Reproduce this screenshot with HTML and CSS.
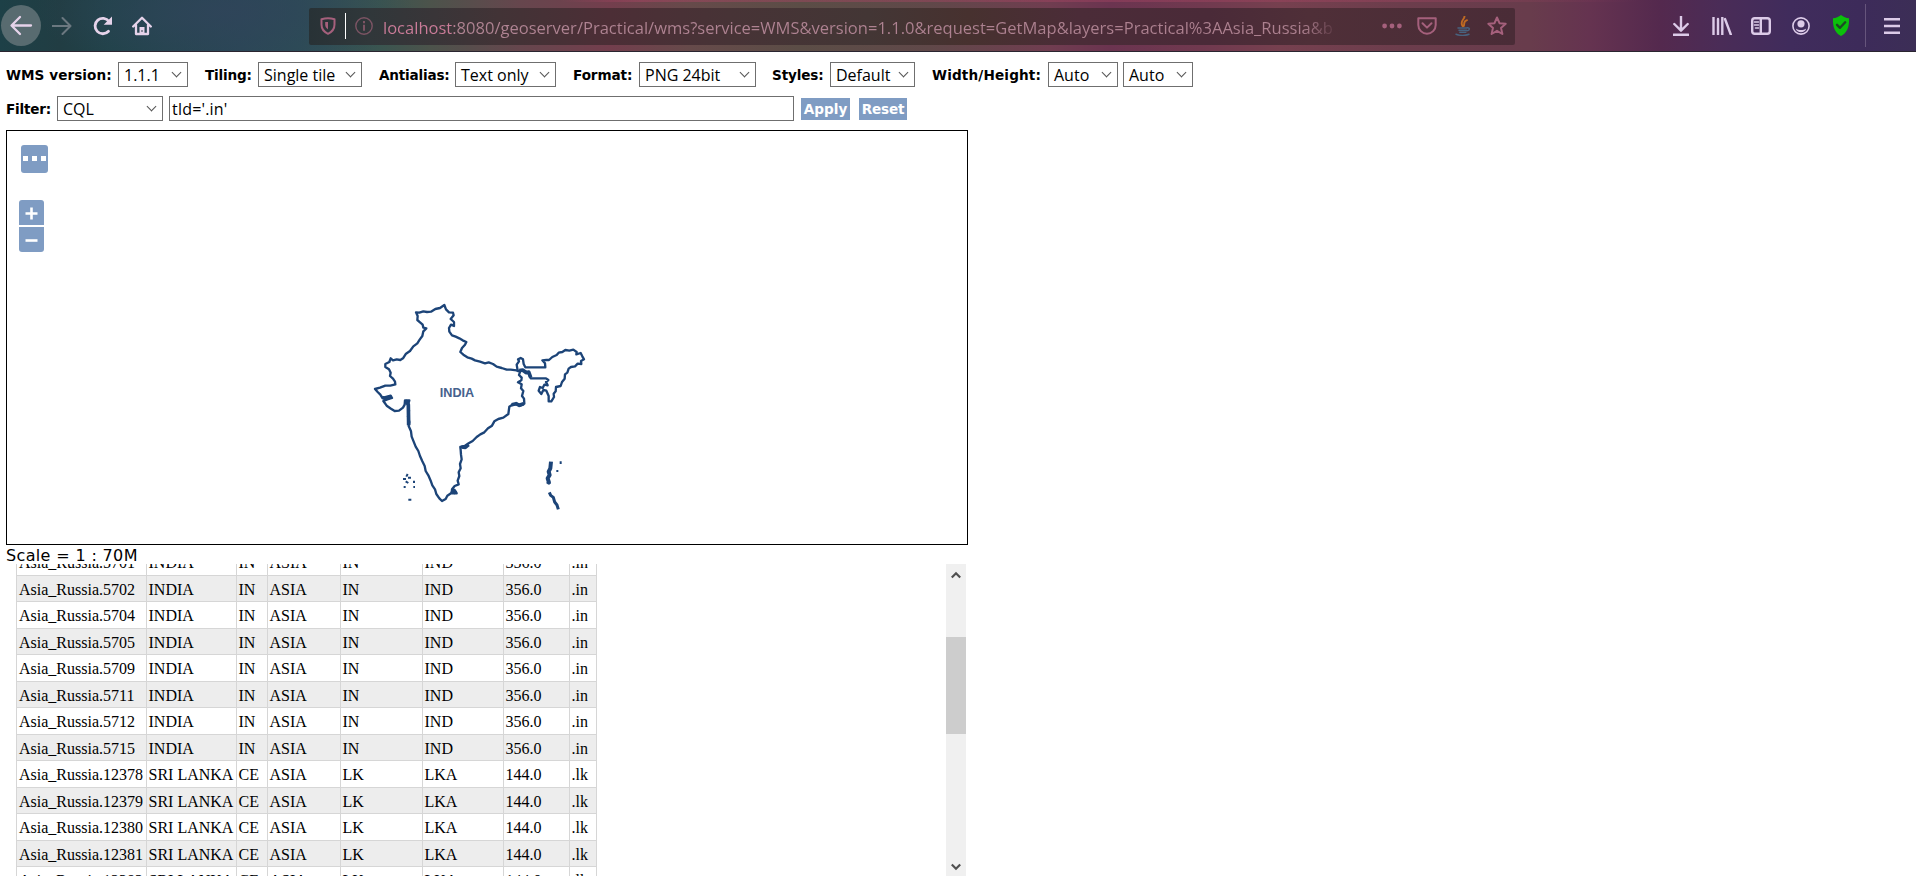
FILE: index.html
```
<!DOCTYPE html>
<html lang="en">
<head>
<meta charset="utf-8">
<title>OpenLayers map preview</title>
<link rel="stylesheet" href="styles.css">
</head>
<body>
<header class="browser">
  <div class="nav">
    <span class="back"><svg width="40" height="41" viewBox="0 0 40 41"><path d="M30 20.5H11M19 12l-8.500 8.500L19 29"/></svg></span>
    <svg class="forward" width="20" height="20" viewBox="0 0 20 20"><path d="M0 10h18M10.500 2l8 8-8 8"/></svg>
    <svg class="reload" width="20" height="20" viewBox="0 0 20 20"><path d="M15.500 15.200A7.700 7.700 0 1 1 16 5.500"/><path class="solid" d="M19 .5v8.300h-8.300z"/></svg>
    <svg class="home" width="20" height="20" viewBox="0 0 20 20"><path d="M1.200 10.500 10 1.800l8.800 8.700M4 9v9h12V9"/><path class="solid" d="M7.500 11h5v8h-5z"/><path class="hole" d="M9.500 14h1v2h-1z"/></svg>
  </div>
  <div class="urlbar">
    <svg class="tracking" width="16" height="18" viewBox="0 0 16 18"><path d="M8 1.200c2.200 0 4.500.4 6.500 1v5.300c0 4.500-2.500 7.500-6.500 9.300C4 15 1.500 12 1.500 7.500V2.200c2-.6 4.300-1 6.500-1z"/><path d="M8 5v7.500C6 11 5.200 9.500 5.200 7.500V5z" class="solid"/></svg>
    <i class="caret"></i>
    <svg class="info" width="18" height="18" viewBox="0 0 18 18"><circle cx="9" cy="9" r="8.200"/><path d="M9 7.800v6M9 4v2.200" class="bold"/></svg>
    <span class="url">localhost:8080/geoserver/Practical/wms?service=WMS&amp;version=1.1.0&amp;request=GetMap&amp;layers=Practical%3AAsia_Russia&amp;b</span>
    <svg class="dots" width="20" height="6" viewBox="0 0 20 6"><circle cx="2.600" cy="3" r="2.400"/><circle cx="10" cy="3" r="2.400"/><circle cx="17.400" cy="3" r="2.400"/></svg>
    <svg class="pocket" width="20" height="18" viewBox="0 0 20 18"><path d="M1.300 1.300h17.400V8a8.700 8.700 0 0 1-17.400 0z"/><path d="m5.500 6.300 4.500 4.300 4.500-4.300"/></svg>
    <svg class="java" width="16" height="20" viewBox="0 0 16 20"><path class="flame" d="M9.500 0C10 3.500 4 5 7.700 10.300M12 4.200C8 5.500 9.800 7.300 8.800 10"/><path class="cup" d="M3 12h9M4 14.200h7.500M4.800 16.300h6M1 18.200c4 1.400 10 1.200 13 0M12 11.800c3.500-.5 2.800 2.700 0 3"/></svg>
    <svg class="star" width="20" height="20" viewBox="0 0 20 20"><path d="m10 1.500 2.500 5.700 6.200.6-4.700 4.100 1.400 6.100-5.400-3.200L4.600 18 6 11.900 1.300 7.800l6.200-.6z"/></svg>
  </div>
  <div class="tools">
    <svg width="16" height="20" viewBox="0 0 16 20"><path d="M8 0v14M1.300 8 8 14.700 14.700 8M.5 18.800h15"/></svg>
    <svg width="20" height="18" viewBox="0 0 20 18"><path d="M1.500 0v18M6 2v16M10.300 0v18M13 2l5.800 15.500"/></svg>
    <svg width="20" height="18" viewBox="0 0 20 18"><rect x="1.200" y="1.200" width="17.600" height="15.600" rx="2.500"/><path d="M9.800 1v16"/><path class="thin" d="M3.500 5h4M3.500 8h4M4.500 11h3"/></svg>
    <svg width="18" height="18" viewBox="0 0 18 18"><circle cx="9" cy="9" r="8.100" class="thin"/><circle cx="9" cy="6.800" r="3.600" class="solid"/><path class="solid" d="M3.800 11.500c3 2 7.400 2 10.400 0-1 5-9.400 5-10.400 0z"/></svg>
    <svg width="18" height="21" viewBox="0 0 18 21"><path class="green" d="M9 0c2.500 2 5 3 8 3.300C17.500 12 15 18 9 21 3 18 .5 12 1 3.300 4 3 6.500 2 9 0z"/><path class="tick" d="m5 9.800 3 3 5.200-5.500"/></svg>
    <i class="divider"></i>
    <svg width="16" height="16" viewBox="0 0 16 16"><path d="M0 1.300h16M0 8h16M0 14.700h16"/></svg>
  </div>
</header>

<main class="page">
  <div class="row first">
    <label class="l-wms">WMS version:</label><div class="select s70">1.1.1</div>
    <label class="l-til">Tiling:</label><div class="select s104">Single tile</div>
    <label class="l-ant">Antialias:</label><div class="select s101">Text only</div>
    <label class="l-for">Format:</label><div class="select s117">PNG 24bit</div>
    <label class="l-sty">Styles:</label><div class="select s85">Default</div>
    <label class="l-wid">Width/Height:</label><div class="select s70">Auto</div><div class="select s70 next">Auto</div>
  </div>
  <div class="row second">
    <label class="l-fil">Filter:</label><div class="select s105">CQL</div>
    <div class="input">tld='.in'</div>
    <div class="button apply">Apply</div><div class="button reset">Reset</div>
  </div>

  <section class="map">
    <svg class="outline" width="240" height="230" viewBox="0 0 720 690">
      <path d="M253 45L240 54 226 57 213 65 201 66 190 64 178 68 168 67 173 78 172 90 180 97 188 104 190 113 199 115 190 124 187 138 179 149 172 160 160 169 150 183 138 191 129 205 121 210 110 208 99 211 92 205 88 216 76 222 76 231 87 238 92 248 90 258 99 266 105 275 106 283 91 287 76 287 60 293 45 297 53 306 61 314 66 322 73 322 92 317 96 324 82 328 70 333 80 347 93 356 104 363 117 362 129 353 134 344 135 331 148 331 144 345 147 362 144 380 148 396 146 408 153 424 155 440 161 455 167 470 175 483 180 498 187 514 194 528 197 543 205 556 212 572 217 586 225 598 229 612 238 625 246 633 257 627 262 617 274 609 290 610 284 600 276 598 284 588 296 583 293 572 298 558 296 547 302 535 300 522 305 508 303 494 302 480 301 471 314 468 326 460 338 453 350 441 361 433 373 427 384 415 396 407 403 394 415 387 430 383 445 372 448 350 457 344 472 342 480 347 493 341 492 326 486 318 490 303 483 295 485 283 474 277 484 271 485 263 477 255 480 246 470 241 452 239 440 239 425 234 410 230 399 222 386 217 375 220 360 215 345 211 335 206 322 202 310 194 301 186 306 174 315 164 319 156 308 151 298 145 287 140 276 136 268 125 267 114 273 104 282 108 282 96 272 87 281 76 279 68 267 67 258 58Z"/>
      <path d="M473 242L470 224 477 214 474 208 482 204 489 208 491 222 496 232 556 232 555 220 547 211 559 210 567 210 577 201 590 195 596 188 607 186 616 180 628 182 640 179 650 186 649 193 662 189 667 199 672 208 663 213 664 222 653 221 645 229 633 231 626 236 622 248 615 253 614 266 606 276 602 288 588 291 587 304 581 311 582 321 574 334 566 334 566 318 559 302 550 300 544 312 536 302 540 291 548 294 553 284 563 286 558 276 565 270 558 265 512 265 506 251 495 243Z"/>
      <path d="M478 242l10-2 10 8 8-2 6 16" class="heavy"/>
      <path d="M66 322l10 4 16-6M136 332l9 12 1 62M455 344l13-3 10 5 13-5M272 602l12 3 4 5M304 471l12 1 10-8" class="heavy"/>
      <path d="M573 515l-2 20-5 10 3 10-6 10 4 13-5-4" class="island"/>
      <path d="M568 607l4 9 8 6 4 14 7 9 4 13" class="island small"/>
      <path d="M602 514v8M592 540v6M143 552l-4 8M129 567h9M144 563h9M137 574l8 5M162 572v7M131 591h6M160 591h5M145 629h9" class="specks"/>
      <text x="291" y="322">INDIA</text>
    </svg>
    <div class="more"><i></i><i></i><i></i></div>
    <div class="zoom">
      <div class="zin"><svg width="13" height="13" viewBox="0 0 13 13"><path d="M.5 6.500h12M6.500 .5v12"/></svg></div>
      <div class="zout"><svg width="13" height="13" viewBox="0 0 13 13"><path d="M.5 6.500h12"/></svg></div>
    </div>
  </section>

  <div class="scale">Scale = 1 : 70M</div>

  <section class="panel">
    <div class="features">
      <div class="tr"><span>Asia_Russia.5701</span><span>INDIA</span><span>IN</span><span>ASIA</span><span>IN</span><span>IND</span><span>356.0</span><span>.in</span></div>
      <div class="tr"><span>Asia_Russia.5702</span><span>INDIA</span><span>IN</span><span>ASIA</span><span>IN</span><span>IND</span><span>356.0</span><span>.in</span></div>
      <div class="tr"><span>Asia_Russia.5704</span><span>INDIA</span><span>IN</span><span>ASIA</span><span>IN</span><span>IND</span><span>356.0</span><span>.in</span></div>
      <div class="tr"><span>Asia_Russia.5705</span><span>INDIA</span><span>IN</span><span>ASIA</span><span>IN</span><span>IND</span><span>356.0</span><span>.in</span></div>
      <div class="tr"><span>Asia_Russia.5709</span><span>INDIA</span><span>IN</span><span>ASIA</span><span>IN</span><span>IND</span><span>356.0</span><span>.in</span></div>
      <div class="tr"><span>Asia_Russia.5711</span><span>INDIA</span><span>IN</span><span>ASIA</span><span>IN</span><span>IND</span><span>356.0</span><span>.in</span></div>
      <div class="tr"><span>Asia_Russia.5712</span><span>INDIA</span><span>IN</span><span>ASIA</span><span>IN</span><span>IND</span><span>356.0</span><span>.in</span></div>
      <div class="tr"><span>Asia_Russia.5715</span><span>INDIA</span><span>IN</span><span>ASIA</span><span>IN</span><span>IND</span><span>356.0</span><span>.in</span></div>
      <div class="tr"><span>Asia_Russia.12378</span><span>SRI LANKA</span><span>CE</span><span>ASIA</span><span>LK</span><span>LKA</span><span>144.0</span><span>.lk</span></div>
      <div class="tr"><span>Asia_Russia.12379</span><span>SRI LANKA</span><span>CE</span><span>ASIA</span><span>LK</span><span>LKA</span><span>144.0</span><span>.lk</span></div>
      <div class="tr"><span>Asia_Russia.12380</span><span>SRI LANKA</span><span>CE</span><span>ASIA</span><span>LK</span><span>LKA</span><span>144.0</span><span>.lk</span></div>
      <div class="tr"><span>Asia_Russia.12381</span><span>SRI LANKA</span><span>CE</span><span>ASIA</span><span>LK</span><span>LKA</span><span>144.0</span><span>.lk</span></div>
      <div class="tr"><span>Asia_Russia.12382</span><span>SRI LANKA</span><span>CE</span><span>ASIA</span><span>LK</span><span>LKA</span><span>144.0</span><span>.lk</span></div>
    </div>
    <div class="scrollbar">
      <svg width="10" height="8" viewBox="0 0 10 8"><path d="m.8 6.500 4.200-4.200 4.200 4.200"/></svg>
      <i class="thumb"></i>
      <svg width="10" height="8" viewBox="0 0 10 8"><path d="M.8 1.500 5 5.700l4.200-4.200"/></svg>
    </div>
  </section>
</main>
</body>
</html>
```
FILE: styles.css
```
* { box-sizing: border-box; }
body {
  margin: 0;
  width: 1916px;
  height: 881px;
  overflow: hidden;
  background: #fff;
  color: #000;
}
svg { display: block; flex: none; fill: none; }

/* browser toolbar */
.browser {
  display: flex;
  align-items: center;
  height: 52px;
  border-bottom: 1px solid #2a2530;
  background:
    linear-gradient(to right, rgba(170, 70, 100, 0) 560px, rgba(170, 70, 100, .45) 640px, rgba(170, 70, 100, .35) 1400px, rgba(170, 70, 100, 0) 1640px) 0 0 / 1916px 2px no-repeat,
    radial-gradient(ellipse 190px 60px at 225px 12px, rgba(48, 68, 90, .8), rgba(48, 68, 90, 0)),
    linear-gradient(to right, #1d4047 0, #213d43 60px, #21434a 110px, #2a4756 240px, #2c4c56 300px, #3a5550 380px, #4c534b 430px, #66464d 520px, #733e4d 610px, #664a4a 690px, #5b4d46 800px, #604849 930px, #703d50 1050px, #6b3450 1110px, #70394f 1200px, #76404f 1280px, #6c3d4c 1400px, #683c4c 1530px, #653350 1590px, #54294e 1660px, #4a2c57 1720px, #402c5c 1790px, #3d2b5a 1860px, #3c2e56 1916px);
}
.nav { display: flex; align-items: center; width: 309px; padding-left: 1px; }
.back { width: 40px; height: 41px; border-radius: 50%; background: #586b70; }
.nav path { stroke: #e6d3ea; stroke-width: 2.3; stroke-linecap: round; stroke-linejoin: round; }
.forward { margin-left: 11px; }
.nav .forward path { stroke: #6b7880; stroke-width: 2; }
.reload { margin-left: 21px; }
.nav .reload path { stroke-width: 2.8; }
.home { margin-left: 19px; }
.nav .solid { fill: #e6d3ea; stroke: none; }
.nav .hole { fill: #34454f; stroke: none; }
.urlbar {
  display: flex;
  align-items: center;
  width: 1206px;
  height: 37px;
  margin-top: 1px;
  padding-left: 11px;
  border-radius: 2px;
  background: linear-gradient(to right, #283236, #30373a 60px, #423336 190px, #4c2e36 300px, #473336 420px, #433635 560px, #47312f 660px, #4b2c38 770px, #4a2a38 900px, #4f2f38 1000px, #4a2c37);
}
.urlbar path, .urlbar circle { stroke: #a5607c; stroke-width: 2; stroke-linejoin: round; stroke-linecap: round; }
.urlbar .solid { fill: #a5607c; stroke: none; }
.caret { width: 1px; height: 26px; margin-left: 9px; background: #fff; }
.info { margin-left: 9px; }
.urlbar .info circle { stroke: #7c5464; stroke-width: 1.4; }
.urlbar .info path { stroke: #7c5464; stroke-linecap: butt; }
.url {
  width: 953px;
  margin: 3px 0 0 10px;
  overflow: hidden;
  white-space: nowrap;
  font: 16.55px/26px "Open Sans", sans-serif;
  color: #b78a9a;
  background: linear-gradient(to right, #cb7c99 0, #cb7c99 70px, #b08493 72px, #ac808f 920px, #5c3944 951px);
  -webkit-background-clip: text;
  background-clip: text;
  -webkit-text-fill-color: transparent;
}
.dots { margin-left: 46px; }
.urlbar .dots circle { fill: #a5607c; stroke: none; }
.pocket { margin-left: 15px; }
.java { margin-left: 18px; }
.urlbar .flame { stroke: #c06a22; stroke-width: 1.9; }
.urlbar .cup { stroke: #48627f; stroke-width: 1.5; }
.star { margin-left: 16px; }
.tools { display: flex; align-items: center; margin-left: 158px; }
.tools path, .tools rect, .tools circle { stroke: #dccbe8; stroke-width: 2.4; stroke-linecap: round; stroke-linejoin: round; }
.tools .thin { stroke-width: 1.6; }
.tools .solid { fill: #dccbe8; stroke: none; }
.tools .green { fill: #0bc00b; stroke: none; }
.tools .tick { stroke: #1d4a24; stroke-width: 2.4; }
.tools svg + svg { margin-left: 23px; }
.tools svg:nth-of-type(3) { margin-left: 19px; }
.tools svg:nth-of-type(4) { margin-left: 21px; }
.tools svg:nth-of-type(5) { margin-left: 22px; }
.divider { width: 1px; height: 43px; margin: 0 18px 0 15px; background: #66557c; }

/* map options */
.page { padding-left: 6px; }
.row { display: flex; align-items: center; }
.first { height: 25px; margin-top: 10px; }
.second { height: 25px; margin-top: 9px; }
label { flex: none; font: bold 13.6px/20px "DejaVu Sans", sans-serif; white-space: nowrap; }
.l-wms { width: 112px; letter-spacing: .05px; }
.l-til { width: 70px; padding-left: 17px; letter-spacing: -.2px; }
.l-ant { width: 93px; padding-left: 17px; letter-spacing: -.2px; }
.l-for { width: 83px; padding-left: 17px; letter-spacing: -.1px; }
.l-sty { width: 74px; padding-left: 16px; letter-spacing: -.15px; }
.l-wid { width: 133px; padding-left: 17px; letter-spacing: .15px; }
.l-fil { width: 51px; letter-spacing: -.2px; }
.select, .input {
  position: relative;
  flex: none;
  height: 25px;
  padding-left: 5px;
  border: 1px solid #6f6f6f;
  font: 16px/24px "Open Sans", sans-serif;
  white-space: nowrap;
}
.select::after {
  content: "";
  position: absolute;
  right: 7px;
  top: 6px;
  width: 6px;
  height: 6px;
  border: solid #555;
  border-width: 0 1px 1px 0;
  transform: rotate(45deg);
}
.s70 { width: 70px; }
.s85 { width: 85px; }
.s101 { width: 101px; }
.s104 { width: 104px; }
.s105 { width: 106px; }
.s117 { width: 117px; }
.next { margin-left: 5px; }
.input { width: 625px; margin-left: 6px; padding-left: 2px; letter-spacing: .2px; }
.button {
  height: 22px;
  background: #7f9cc3;
  color: #fff;
  font: bold 13.6px/22px "DejaVu Sans", sans-serif;
  text-align: center;
}
.apply { width: 49px; margin-left: 7px; }
.reset { width: 48px; margin-left: 9px; letter-spacing: -.2px; }

/* map viewport */
.map { position: relative; width: 962px; height: 415px; margin-top: 9px; border: 1px solid #000; }
.outline { position: absolute; left: 353px; top: 159px; overflow: visible; }
.outline path { stroke: #1c4478; stroke-width: 7; stroke-linejoin: round; }
.outline .heavy { stroke-width: 11; }
.outline .island { stroke-width: 12; }
.outline .small { stroke-width: 9; }
.outline .specks { stroke-width: 6; }
.outline text { font: bold 38px "Liberation Sans", sans-serif; fill: #46618d; text-anchor: middle; }
.more {
  position: absolute;
  left: 14px;
  top: 14px;
  display: flex;
  justify-content: center;
  gap: 4px;
  width: 27px;
  height: 28px;
  padding-top: 11px;
  border-radius: 3px;
  background: #7f9cc3;
}
.more i { width: 5px; height: 5px; background: #fff; }
.zoom { position: absolute; left: 12px; top: 69px; display: grid; gap: 2px; }
.zin, .zout { display: grid; place-items: center; width: 25px; height: 25px; background: #7f9cc3; }
.zin { border-radius: 3px 3px 0 0; padding-top: 2px; }
.zout { border-radius: 0 0 3px 3px; padding-top: 2px; }
.zoom path { stroke: #fff; stroke-width: 2.6; }
.scale { height: 19px; padding-top: 1px; font: 16px/20px "DejaVu Sans", sans-serif; letter-spacing: .35px; }

/* feature info */
.panel { display: flex; justify-content: space-between; width: 960px; height: 312px; overflow: hidden; }
.features { width: 581px; margin: -15px 0 0 10px; }
.tr {
  display: grid;
  grid-template-columns: 130px 90px 31px 73px 82px 81px 66px 27px;
  height: 26.5px;
  border-bottom: 1px solid #d6d6d6;
  border-right: 1px solid #d6d6d6;
  font: 16px/27px "Liberation Serif", serif;
  white-space: nowrap;
}
.tr:nth-child(even) { background: #ededed; }
.tr span { padding-left: 2px; border-left: 1px solid #d6d6d6; }
.tr span:nth-child(n+2) { padding-left: 1.5px; }
.scrollbar { display: flex; flex-direction: column; align-items: center; width: 20px; height: 312px; padding: 7px 0 5px; background: #f0f0f0; }
.thumb { width: 20px; height: 97px; margin: 58px 0 auto; background: #cdcdcd; }
.scrollbar path { stroke: #505050; stroke-width: 2.2; }
```
